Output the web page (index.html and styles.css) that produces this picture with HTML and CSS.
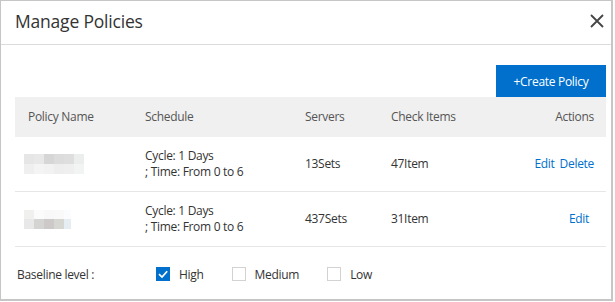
FILE: index.html
```html
<!DOCTYPE html>
<html>
<head>
<meta charset="utf-8">
<link rel="stylesheet" href="styles.css">
</head>
<body>
<div class="dialog">
  <div class="header">
    <div class="title">Manage Policies</div>
    <svg class="close" width="14" height="14" viewBox="0 0 14 14"><path d="M1 1 L13 13 M13 1 L1 13" stroke="#444" stroke-width="1.8" fill="none"/></svg>
  </div>
  <div class="body">
    <div class="toolbar">
      <button class="btn-primary">+Create Policy</button>
    </div>
    <div class="table">
      <div class="row head">
        <div class="c c1">Policy Name</div>
        <div class="c c2">Schedule</div>
        <div class="c c3">Servers</div>
        <div class="c c4">Check Items</div>
        <div class="c c5">Actions</div>
      </div>
      <div class="row">
        <div class="c c1">
          <div class="blur b1">
            <i style="background:#e6e6e6"></i><i style="background:#e8e8e8"></i><i style="background:#d6d6d6"></i><i style="background:#dcdcdc"></i><i style="background:#dedede"></i><i style="background:#eceeee"></i>
            <i style="background:#efefef"></i><i style="background:#f4f4f4"></i><i style="background:#f2f2f2"></i><i style="background:#eeeeee"></i><i style="background:#efefef"></i><i style="background:#f2f3f3"></i>
          </div>
        </div>
        <div class="c c2"><div class="ln">Cycle: 1 Days</div><div class="ln">; Time: From 0 to 6</div></div>
        <div class="c c3">13Sets</div>
        <div class="c c4">47Item</div>
        <div class="c c5"><a class="link">Edit</a><a class="link last">Delete</a></div>
      </div>
      <div class="row">
        <div class="c c1">
          <div class="blur b2">
            <i style="background:#f0f0ef"></i><i style="background:#fbfbfb"></i><i style="background:#f8f8f8"></i><i style="background:#f9f9f9"></i><i style="background:#fafcfd"></i>
            <i style="background:#e8e8e8"></i><i style="background:#d4d4d2"></i><i style="background:#ccc9c8"></i><i style="background:#d6d6d2"></i><i style="background:#e6eef3"></i>
          </div>
        </div>
        <div class="c c2"><div class="ln">Cycle: 1 Days</div><div class="ln">; Time: From 0 to 6</div></div>
        <div class="c c3">437Sets</div>
        <div class="c c4">31Item</div>
        <div class="c c5"><a class="link">Edit</a></div>
      </div>
    </div>
  </div>
  <div class="footer">
    <div class="label">Baseline level :</div>
    <label class="check"><span class="box checked"><svg width="14" height="14" viewBox="0 0 14 14"><path d="M3 7.2 L6 10 L11.2 4.2" stroke="#fff" stroke-width="1.7" fill="none"/></svg></span><span>High</span></label>
    <label class="check"><span class="box"></span><span>Medium</span></label>
    <label class="check"><span class="box"></span><span>Low</span></label>
  </div>
</div>
</body>
</html>
```
FILE: styles.css
```css
* { box-sizing: border-box; }
body {
  margin: 0;
  background: #fff;
  font-family: "Open Sans", "Noto Sans", sans-serif;
  font-size: 12px;
  color: #333;
}
.dialog {
  width: 613px;
  height: 301px;
  border: 1px solid #c6c6c6;
  border-right-width: 2px;
  border-bottom-width: 2px;
  background: #fff;
  display: flex;
  flex-direction: column;
}
.header {
  height: 44px;
  border-bottom: 1px solid #dcdcdc;
  display: flex;
  align-items: center;
  justify-content: space-between;
  padding: 0 7px 0 14px;
}
.title {
  font-size: 17.5px;
  color: #333;
  letter-spacing: -0.2px;
  margin-top: -4px;
}
.close { margin-top: -4px; }
.body {
  padding: 20px 5px 0 14px;
}
.toolbar {
  display: flex;
  justify-content: flex-end;
}
.btn-primary {
  width: 110px;
  height: 32px;
  border: 0;
  background: #0070cc;
  color: #fff;
  font-family: inherit;
  font-size: 12px;
  letter-spacing: -0.3px;
  padding: 0;
}
.row {
  display: flex;
  height: 55px;
  align-items: center;
  border-bottom: 1px solid #e6e6e6;
  letter-spacing: -0.3px;
}
.row.head {
  height: 40px;
  background: #f0f0f0;
  border-bottom: 0;
  color: #555;
}
.c { padding-left: 13px; line-height: 16px; }
.ln { line-height: 16px; }
.c1 { width: 117px; }
.c2 { width: 160px; }
.c3 { width: 86px; }
.c4 { width: 100px; }
.c5 { flex: 1; text-align: right; padding-right: 12px; }
.blur {
  display: grid;
  grid-template-columns: repeat(6, 10px);
  grid-auto-rows: 10px;
  margin-left: -4px;
}
.blur.b2 {
  grid-template-columns: repeat(4, 10px) 7px;
  grid-auto-rows: 9.5px;
}
.blur i { display: block; }
.link {
  color: #0070cc;
  margin-right: 5px;
  cursor: pointer;
}
.link.last { margin-right: 0; }
.footer {
  flex: 1;
  display: flex;
  align-items: center;
  padding-left: 16px;
  padding-top: 2px;
  letter-spacing: -0.3px;
}
.label { width: 139px; }
.check {
  display: flex;
  align-items: center;
  margin-right: 28px;
}
.box {
  width: 14px;
  height: 14px;
  border: 1px solid #d2d2d2;
  margin-right: 9px;
  display: flex;
}
.box.checked {
  background: #0070cc;
  border-color: #0070cc;
}
.box.checked svg { margin: -1px; }
```
